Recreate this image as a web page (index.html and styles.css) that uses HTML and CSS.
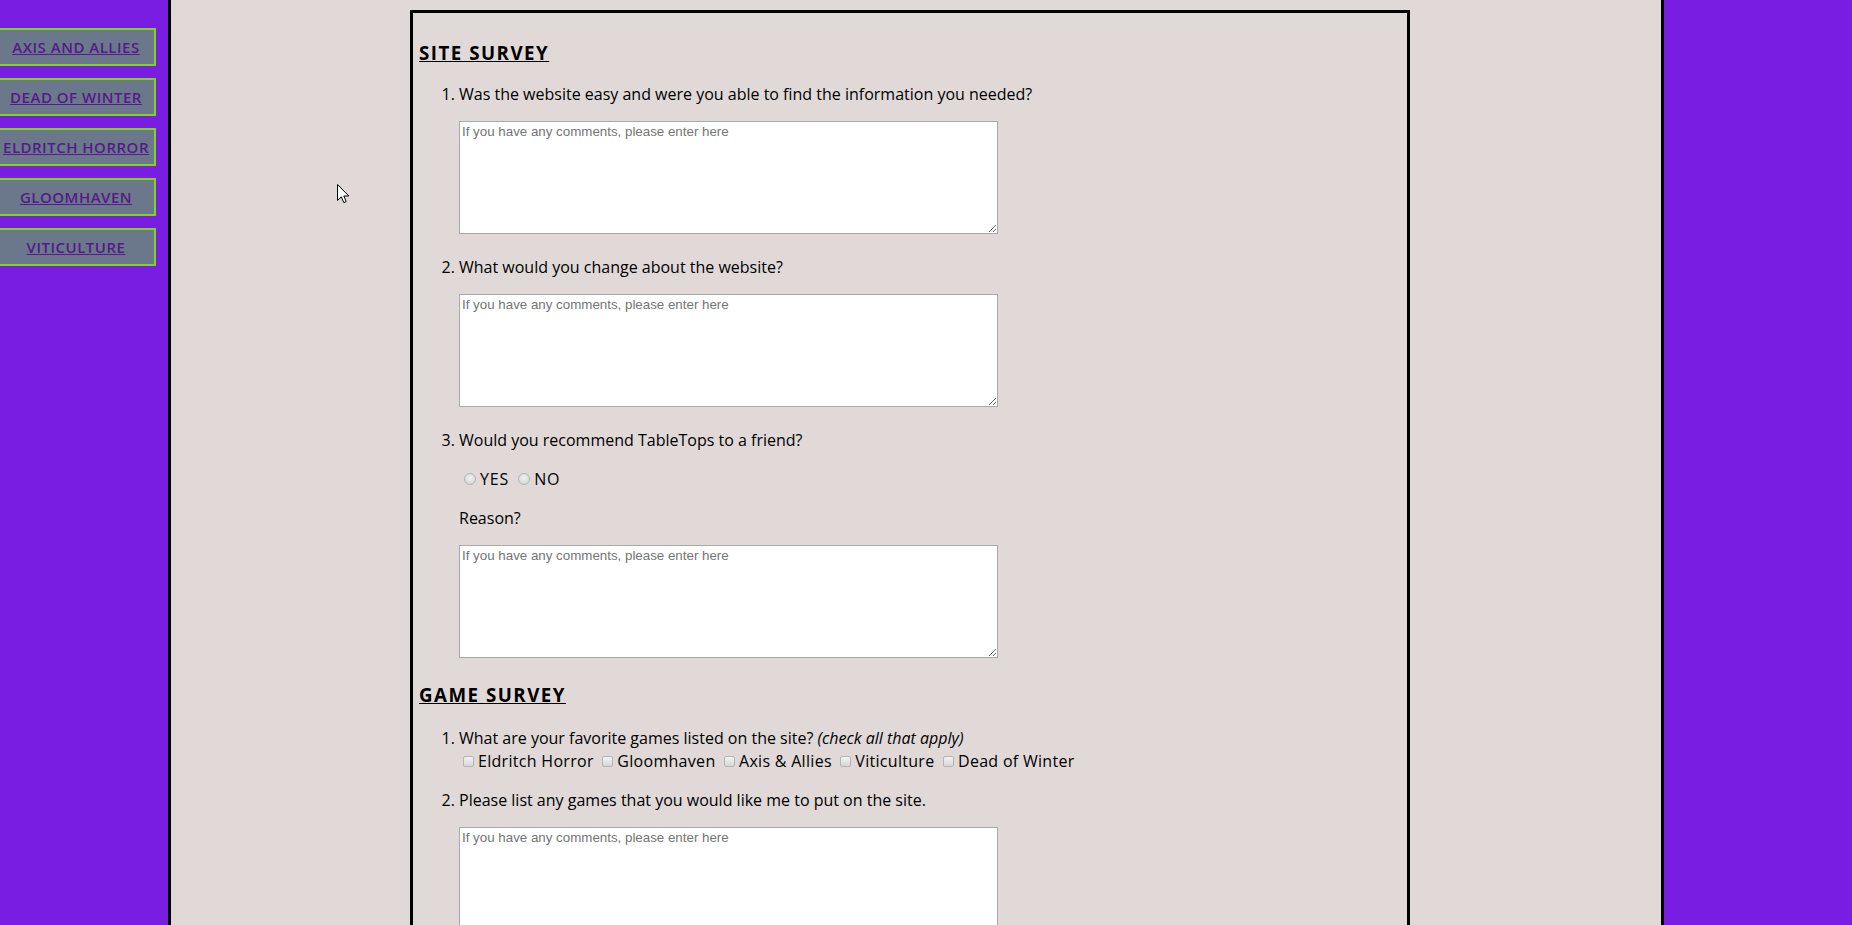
FILE: index.html
```html
<html lang="en">

<head>
    <meta charset="UTF-8">
    <meta name="viewport" content="width=device-width, initial-scale=1.0">
    <title>TableTops - Survey</title>
    <link rel="stylesheet" href="styles.css">
</head>

<body>
    <div class="sidebar">
        <ul class="nav">
            <li><a href="#">AXIS AND ALLIES</a></li>
            <li><a href="#">DEAD OF WINTER</a></li>
            <li><a href="#">ELDRITCH HORROR</a></li>
            <li><a href="#">GLOOMHAVEN</a></li>
            <li><a href="#">VITICULTURE</a></li>
        </ul>
    </div>

    <div class="main">
        <form class="survey">
            <h3>SITE SURVEY</h3>
            <ol>
                <li>Was the website easy and were you able to find the information you needed?
                    <textarea placeholder="If you have any comments, please enter here"></textarea>
                </li>
                <li>What would you change about the website?
                    <textarea placeholder="If you have any comments, please enter here"></textarea>
                </li>
                <li>Would you recommend TableTops to a friend?
                    <p class="choice">
                        <label><input type="radio" name="recommend" value="yes">YES</label>
                        <label><input type="radio" name="recommend" value="no">NO</label>
                    </p>
                    <p class="reason">Reason?</p>
                    <textarea placeholder="If you have any comments, please enter here"></textarea>
                </li>
            </ol>

            <h3>GAME SURVEY</h3>
            <ol class="games">
                <li>What are your favorite games listed on the site? <i>(check all that apply)</i>
                    <div class="checks">
                        <label><input type="checkbox" name="fav">Eldritch Horror</label>
                        <label><input type="checkbox" name="fav">Gloomhaven</label>
                        <label><input type="checkbox" name="fav">Axis &amp; Allies</label>
                        <label><input type="checkbox" name="fav">Viticulture</label>
                        <label><input type="checkbox" name="fav">Dead of Winter</label>
                    </div>
                </li>
                <li>Please list any games that you would like me to put on the site.
                    <textarea placeholder="If you have any comments, please enter here"></textarea>
                </li>
            </ol>
        </form>
    </div>

    <div class="edge"></div>

    <svg class="pointer" width="13" height="20" viewBox="0 0 13 20">
        <path d="M0.5 0.5 L0.5 16.5 L4.3 12.8 L6.8 18.6 L9.2 17.6 L6.8 12 L11.8 12 Z" fill="#fff" stroke="#000" stroke-width="1" stroke-linejoin="miter"/>
    </svg>
</body>

</html>
```

FILE: styles.css
```css
:root {
    --purple: #791de2;
    --paper: #e0d9d8;
    --button: #6b778a;
    --button-border: #7ed81a;
    --link: #551a8b;
}

body {
    margin: 0;
    display: flex;
    min-height: 100vh;
    background-color: var(--purple);
    font-family: "Open Sans", sans-serif;
    font-size: 16px;
    line-height: 23px;
    color: #000;
}

.sidebar {
    width: 168px;
    flex: none;
    padding-top: 28px;
}

.nav {
    list-style: none;
    margin: 0;
    padding: 0;
    display: flex;
    flex-direction: column;
    gap: 12px;
}

.nav a {
    display: block;
    box-sizing: border-box;
    width: 156px;
    height: 38px;
    padding-right: 2px;
    line-height: 34px;
    background-color: var(--button);
    border: 2px solid var(--button-border);
    border-left: 0;
    text-align: center;
    white-space: nowrap;
    color: var(--link);
    font-size: 15px;
    font-weight: 600;
    letter-spacing: 0.5px;
    text-decoration: underline;
}

.main {
    width: 1490px;
    flex: none;
    background-color: var(--paper);
    border-left: 3px solid #000;
    border-right: 3px solid #000;
}

.edge {
    flex: 1;
}

.survey {
    box-sizing: border-box;
    width: 1000px;
    margin: 10px 0 0 239px;
    padding: 3px 6px 40px;
    border: 3px solid #000;
}

h3 {
    font-size: 18.72px;
    line-height: 26px;
    font-weight: 700;
    letter-spacing: 1.5px;
    text-decoration: underline;
    margin: 24px 0 17px;
}

ol {
    margin: 0;
    padding-left: 40px;
}

.games {
    padding-top: 2px;
}

textarea {
    display: block;
    box-sizing: border-box;
    width: 539px;
    height: 113px;
    margin: 15px 0 22px;
    padding: 2px;
    border: 1px solid #a9a9a9;
    background: #fff;
    font-family: "Liberation Sans", Arial, sans-serif;
    font-size: 13.33px;
}

textarea::placeholder {
    color: #757575;
}

.choice {
    margin: 16px 0;
}

.reason {
    margin: 16px 0 14px;
}

.choice label {
    letter-spacing: 0.8px;
}

.checks {
    margin-bottom: 16px;
    letter-spacing: 0.3px;
}

input[type="radio"],
input[type="checkbox"] {
    appearance: none;
    display: inline-block;
    width: 12px;
    height: 12px;
    margin: 0 4px 0 5px;
    border: 1px solid #b4b4b4;
    box-sizing: border-box;
    background: radial-gradient(circle at 50% 40%, #f2f2f2, #cfcfcf);
    vertical-align: baseline;
}

input[type="radio"] {
    border-radius: 50%;
}

input[type="checkbox"] {
    width: 11px;
    height: 11px;
    margin: 0 4px 0 4px;
    border-radius: 2px;
    background: linear-gradient(#f4f4f4, #d6d6d6);
}

.pointer {
    position: absolute;
    left: 337px;
    top: 184px;
}
```
